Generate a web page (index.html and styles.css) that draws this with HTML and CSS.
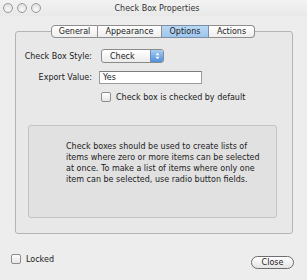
FILE: index.html
```html
<!DOCTYPE HTML>
<html>

<head>
    <meta charset="UTF-8">
    <title>Check Box Properties</title>
    <link rel="stylesheet" href="styles.css">
</head>

<body>
    <div class="window">
        <div class="titlebar">
            <div class="lights">
                <span class="light"></span>
                <span class="light"></span>
                <span class="light"></span>
            </div>
            <div class="title">Check Box Properties</div>
        </div>

        <div class="tabs">
            <span class="tab tab-first">General</span>
            <span class="tab">Appearance</span>
            <span class="tab tab-active">Options</span>
            <span class="tab tab-last">Actions</span>
        </div>

        <div class="tabbox">
            <div class="form">
                <label class="form-label">Check Box Style:</label>
                <div class="popup">
                    <span class="popup-text">Check</span>
                    <span class="popup-arrows">
                        <svg width="5" height="8" viewBox="0 0 5 8">
                            <path d="M0.5 3.2 L2.5 0.8 L4.5 3.2 Z M0.5 4.8 L2.5 7.2 L4.5 4.8 Z" fill="#fff"/>
                        </svg>
                    </span>
                </div>

                <label class="form-label">Export Value:</label>
                <div class="field">Yes</div>

                <span></span>
                <div class="check-row">
                    <span class="checkbox"></span>
                    <span>Check box is checked by default</span>
                </div>
            </div>

            <div class="info">
                Check boxes should be used to create lists of
                items where zero or more items can be selected
                at once. To make a list of items where only one
                item can be selected, use radio button fields.
            </div>
        </div>

        <div class="footer">
            <div class="check-row">
                <span class="checkbox"></span>
                <span>Locked</span>
            </div>
            <div class="button">Close</div>
        </div>
    </div>
</body>

</html>
```

FILE: styles.css
```css
body {
    margin: 0;
    background-color: #ededed;
    font-family: "DejaVu Sans", Verdana, sans-serif;
    font-size: 8px;
    color: #1a1a1a;
}

.window {
    width: 307px;
    height: 280px;
    overflow: hidden;
}

.titlebar {
    height: 16px;
    display: flex;
    align-items: center;
    background: linear-gradient(#f2f2f2, #e9e9e9);
}

.lights {
    display: flex;
    gap: 4px;
    padding-left: 3px;
}

.light {
    width: 8px;
    height: 8px;
    border-radius: 50%;
    border: 1px solid #9a9a9a;
    background: radial-gradient(circle at 50% 70%, #fafafa, #d8d8d8);
}

.title {
    flex: 1;
    text-align: center;
    margin-left: -34px;
    font-size: 8px;
    color: #333;
}

.tabs {
    display: flex;
    justify-content: center;
    margin-top: 9px;
    margin-bottom: -7px;
    margin-left: -1px;
    position: relative;
    z-index: 1;
}

.tab {
    height: 11px;
    line-height: 11px;
    border: 1px solid #8e8e8e;
    border-left: none;
    background: linear-gradient(#ffffff, #eeeeee);
    text-align: center;
    color: #222;
}

.tab:nth-child(1) { width: 45px; }
.tab:nth-child(2) { width: 63px; }
.tab:nth-child(3) { width: 46px; }
.tab:nth-child(4) { width: 45px; }

.tab-first {
    border-left: 1px solid #8e8e8e;
    border-radius: 4px 0 0 4px;
}

.tab-last {
    border-radius: 0 4px 4px 0;
}

.tab-active {
    background: linear-gradient(#b9d7f4, #9fc6ee);
    border-color: #7a8fa8;
}

.tabbox {
    margin: 0 14px 0 15px;
    height: 201px;
    border: 1px solid #b4b4b4;
    border-radius: 3px;
    background-color: #e8e8e8;
}

.form {
    display: grid;
    grid-template-columns: 76px auto;
    column-gap: 7px;
    row-gap: 8px;
    align-items: center;
    padding-top: 17px;
}

.form-label {
    text-align: right;
    color: #222;
}

.popup {
    width: 61px;
    height: 12px;
    margin-left: 2px;
    border: 1px solid #8a8a8a;
    border-radius: 3px;
    display: flex;
    align-items: center;
    background: linear-gradient(#ffffff, #ececec);
    overflow: hidden;
}

.popup-text {
    flex: 1;
    padding-left: 8px;
}

.popup-arrows {
    width: 12px;
    height: 12px;
    display: flex;
    align-items: center;
    justify-content: center;
    background: linear-gradient(#a8cdf3, #4d8fdc);
    border-left: 1px solid #6f8fb4;
}

.field {
    width: 98px;
    height: 11px;
    line-height: 11px;
    padding-left: 3px;
    border: 1px solid #9c9c9c;
    border-top-color: #7d7d7d;
    background-color: #fff;
}

.check-row {
    display: flex;
    align-items: center;
    gap: 5px;
}

.form .check-row {
    margin-left: 2px;
}

.checkbox {
    width: 8px;
    height: 8px;
    border: 1px solid #8d8d8d;
    border-radius: 2px;
    background: linear-gradient(#ffffff, #e6e6e6);
}

.info {
    margin: 23px 15px 0 12px;
    height: 76px;
    padding: 15px 10px 0 37px;
    border: 1px solid #c4c4c4;
    border-radius: 3px;
    background-color: #e1e1e1;
    line-height: 11px;
    color: #222;
}

.footer {
    display: flex;
    justify-content: space-between;
    align-items: center;
    padding: 19px 13px 0 11px;
}

.footer .check-row {
    margin-top: -4px;
}

.button {
    width: 41px;
    height: 11px;
    line-height: 11px;
    border: 1px solid #6e6e6e;
    border-radius: 7px;
    text-align: center;
    background: linear-gradient(#ffffff, #e4e4e4);
    margin-top: 3px;
}
```
